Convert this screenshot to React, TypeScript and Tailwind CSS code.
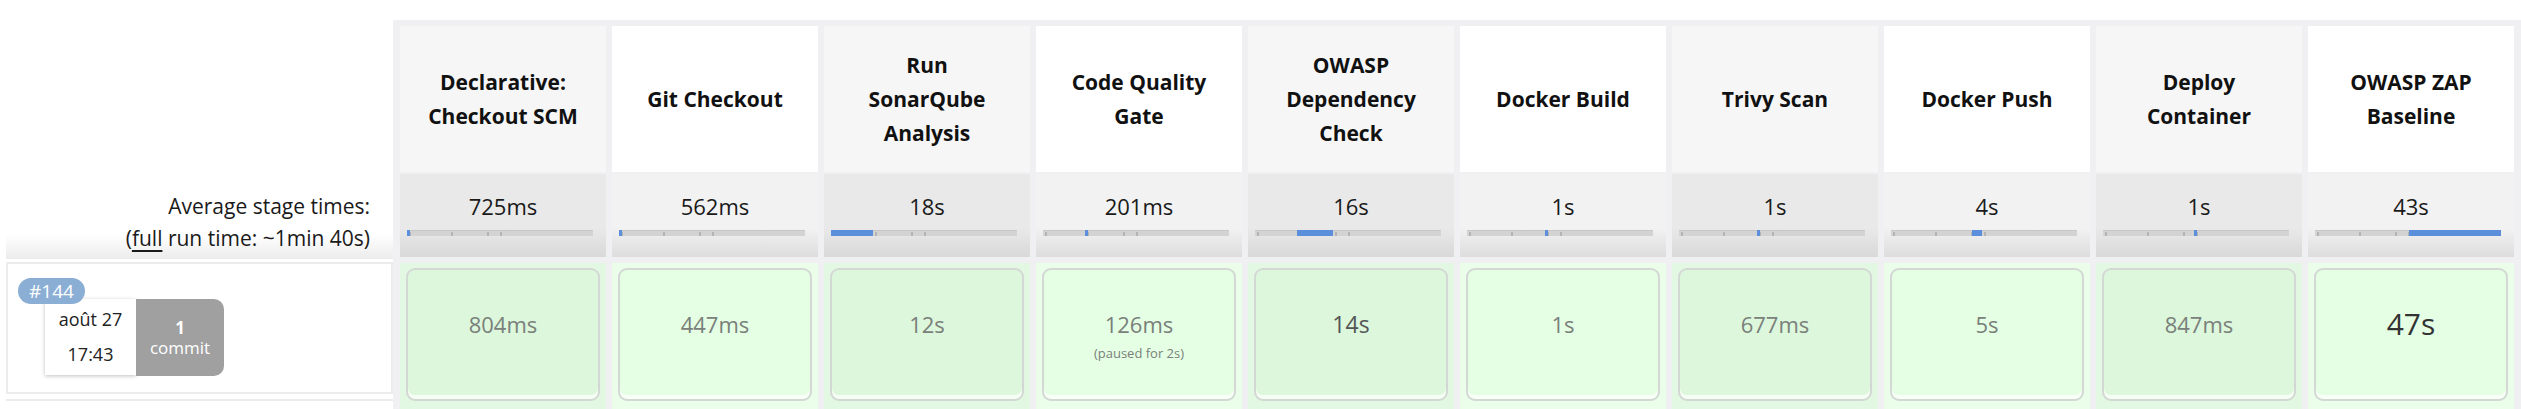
import React from "react";

type Stage = {
  lines: string[];
  avg: string;
  seg: [number, number];
  run: string;
  runClass?: string;
  note?: string;
};

const stages: Stage[] = [
  { lines: ["Declarative:", "Checkout SCM"], avg: "725ms", seg: [0, 3], run: "804ms" },
  { lines: ["Git Checkout"], avg: "562ms", seg: [0, 3], run: "447ms" },
  { lines: ["Run", "SonarQube", "Analysis"], avg: "18s", seg: [0, 42], run: "12s" },
  { lines: ["Code Quality", "Gate"], avg: "201ms", seg: [42, 3], run: "126ms", note: "(paused for 2s)" },
  { lines: ["OWASP", "Dependency", "Check"], avg: "16s", seg: [42, 36], run: "14s", runClass: "text-[#555] text-[23px]" },
  { lines: ["Docker Build"], avg: "1s", seg: [78, 3], run: "1s" },
  { lines: ["Trivy Scan"], avg: "1s", seg: [78, 3], run: "677ms" },
  { lines: ["Docker Push"], avg: "4s", seg: [81, 10], run: "5s" },
  { lines: ["Deploy", "Container"], avg: "1s", seg: [91, 3], run: "847ms" },
  { lines: ["OWASP ZAP", "Baseline"], avg: "43s", seg: [94, 92], run: "47s", runClass: "text-[#333] text-[30px]" },
];

// small marks left on the bar by the other stages
const ticks = [0, 42, 78, 91];

function Bar({ seg }: { seg: [number, number] }) {
  return (
    <div className="relative ml-[7px] w-[186px] h-[6px] bg-[#d3d3d3] border-t border-[#c6c6c6]">
      {ticks.map((t) => (
        <div
          key={t}
          className="absolute top-[1px] w-[2px] h-[4px] bg-[#b4b4b4]"
          style={{ left: t + 2 }}
        />
      ))}
      <div
        className="absolute -top-[1px] h-[6px] bg-[#5b8edb]"
        style={{ left: seg[0], width: seg[1] }}
      />
    </div>
  );
}

function StageColumn({ stage, index }: { stage: Stage; index: number }) {
  const odd = index % 2 === 0;
  return (
    <div className="flex flex-col w-[206px] shrink-0">
      <div
        className={`h-[150px] flex flex-col items-center justify-center font-bold text-[21px] leading-[34px] text-[#111] ${
          odd ? "bg-[#f6f6f6]" : "bg-white"
        }`}
      >
        {stage.lines.map((l) => (
          <div key={l} className="whitespace-nowrap">
            {l}
          </div>
        ))}
      </div>
      <div
        className={`mt-[2px] h-[84px] flex flex-col pt-[16px] bg-linear-to-b ${
          odd ? "from-[#e9e9e9] from-65% to-[#d9d9d9]" : "from-[#f2f2f2] from-65% to-[#dddddd]"
        }`}
      >
        <div className="text-center text-[22px] leading-[32px] text-[#1a1a1a]">{stage.avg}</div>
        <div className="mt-[8px]">
          <Bar seg={stage.seg} />
        </div>
      </div>
      <div className={`mt-[6px] h-[150px] pt-[5px] px-[6px] ${odd ? "bg-[#e3f8e3]" : "bg-[#eafeea]"}`}>
        <div
          className={`h-[133px] rounded-[9px] border-2 border-[#d4d8d4] shadow-[inset_0_-4px_0_rgba(255,255,255,0.7)] flex flex-col items-center pt-[38px] ${
            odd ? "bg-[#dcf7dc]" : "bg-[#e5ffe5]"
          }`}
        >
          <div className={`leading-[32px] ${stage.runClass ?? "text-[22px] text-[#7a807a]"}`}>{stage.run}</div>
          {stage.note && <div className="mt-[4px] text-[13px] text-[#7a807a]">{stage.note}</div>}
        </div>
      </div>
    </div>
  );
}

export default function App() {
  return (
    <div className="flex w-[2521px] h-[409px] overflow-hidden bg-white font-['Open_Sans',sans-serif]">
      <div className="w-[393px] shrink-0 flex flex-col">
        <div className="h-[178px]" />
        <div className="ml-[6px] h-[84px] pt-[14px] pr-[23px] text-right text-[21px] leading-[32px] text-[#1a1a1a] bg-linear-to-b from-white from-70% to-[#ececec]">
          <div>Average stage times:</div>
          <div>
            (<span className="underline underline-offset-4 decoration-2">full</span> run time: ~1min 40s)
          </div>
        </div>
        <div className="ml-[6px] mt-[3px] h-[133px] border-2 border-[#ececec] bg-white pl-[10px] pt-[14px]">
          <div className="relative z-10 inline-block rounded-full bg-[#8aaed4] px-[11px] text-[19px] leading-[26px] text-white">
            #144
          </div>
          <div className="flex -mt-[5px] ml-[27px]">
            <div className="w-[91px] h-[76px] bg-white shadow-[0_1px_4px_rgba(0,0,0,0.25)] flex flex-col items-center justify-center text-[18px] leading-[35px] text-[#222]">
              <div>août 27</div>
              <div>17:43</div>
            </div>
            <div className="w-[88px] h-[77px] rounded-r-[10px] bg-[#a0a0a0] flex flex-col items-center justify-center text-white text-[17px] leading-[20px]">
              <div className="font-bold">1</div>
              <div>commit</div>
            </div>
          </div>
        </div>
        <div className="ml-[6px] mt-[5px] border-t-2 border-[#ececec] h-[10px]" />
      </div>
      <div className="mt-[20px] bg-[#f0f0f3] pt-[6px] pl-[7px] pr-[7px] flex gap-[6px]">
        {stages.map((s, i) => (
          <StageColumn key={i} stage={s} index={i} />
        ))}
      </div>
    </div>
  );
}
